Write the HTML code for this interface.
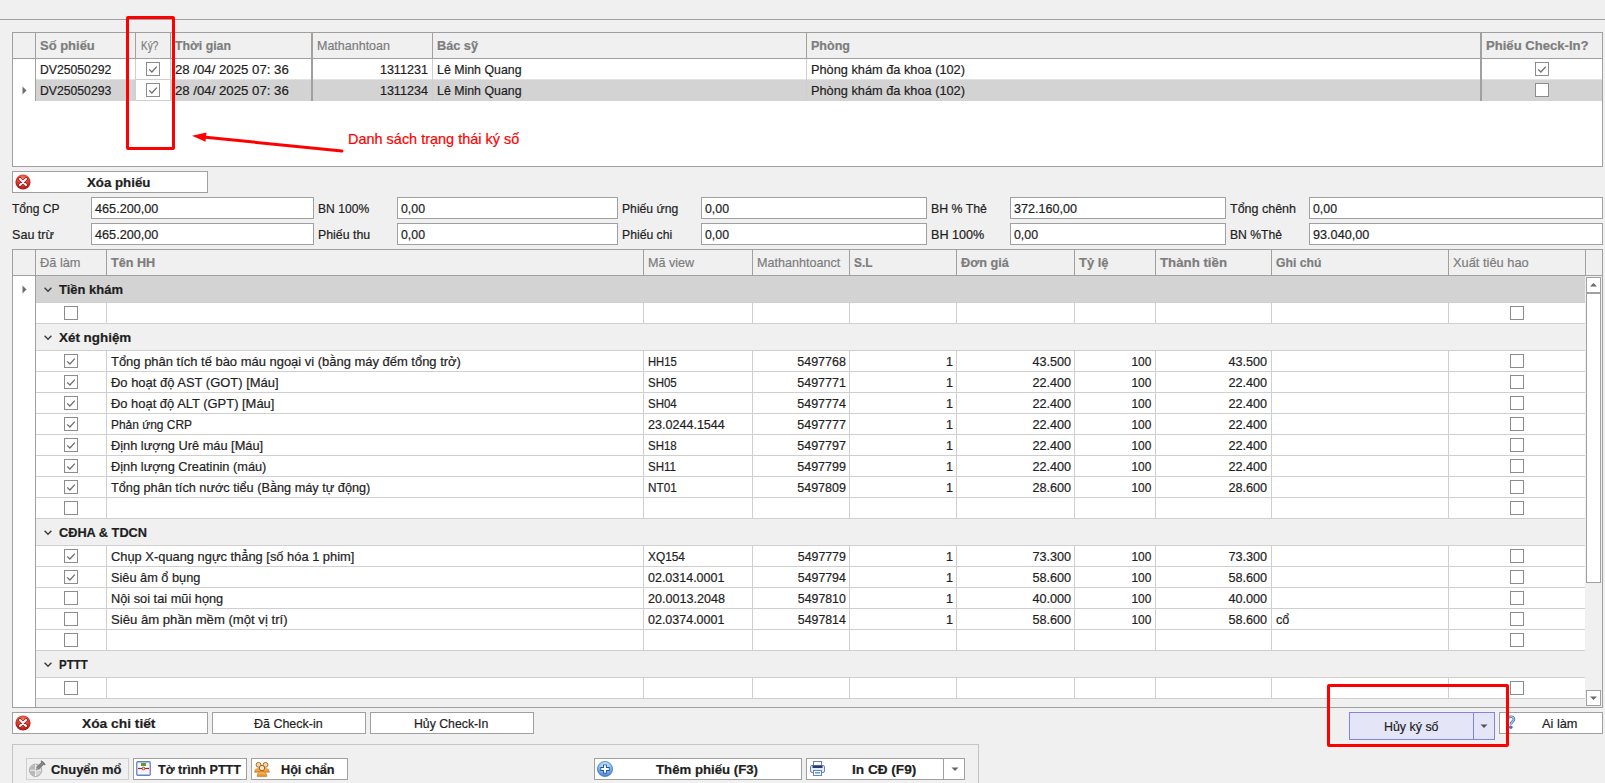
<!DOCTYPE html>
<html><head><meta charset="utf-8"><style>
html,body{margin:0;padding:0}
body{width:1605px;height:783px;overflow:hidden;position:relative;background:#f0f0f0;font-family:'Liberation Sans', sans-serif;}
.a{position:absolute;box-sizing:border-box}
.t{position:absolute;white-space:nowrap;line-height:20px;-webkit-text-stroke:0.2px currentColor}
svg.a{overflow:visible}
</style></head><body>
<div class="a" style="left:0px;top:19px;width:1605px;height:1px;background:#a0a0a0;"></div>
<div class="a" style="left:12px;top:32px;width:1591px;height:135px;background:#fff;border:1px solid #a0a0a0;"></div>
<div class="a" style="left:13px;top:33px;width:1589px;height:25px;background:#f0f0f0;"></div>
<div class="a" style="left:13px;top:58px;width:1589px;height:1px;background:#a0a0a0;"></div>
<div class="a" style="left:35px;top:33px;width:1px;height:25px;background:#a0a0a0;"></div>
<div class="a" style="left:127px;top:33px;width:1px;height:25px;background:#a0a0a0;"></div>
<div class="a" style="left:135px;top:33px;width:1px;height:25px;background:#a0a0a0;"></div>
<div class="a" style="left:170px;top:33px;width:1px;height:25px;background:#a0a0a0;"></div>
<div class="a" style="left:432px;top:33px;width:1px;height:25px;background:#a0a0a0;"></div>
<div class="a" style="left:806px;top:33px;width:1px;height:25px;background:#a0a0a0;"></div>
<div class="a" style="left:311px;top:33px;width:2px;height:25px;background:#a0a0a0;"></div>
<div class="a" style="left:1480px;top:33px;width:2px;height:25px;background:#a0a0a0;"></div>
<div class="a" style="left:36px;top:80px;width:1566px;height:21px;background:#d3d3d3;"></div>
<div class="a" style="left:136px;top:80px;width:34px;height:21px;background:#fff;"></div>
<div class="a" style="left:36px;top:79px;width:1566px;height:1px;background:#e2e2e2;"></div>
<div class="a" style="left:135px;top:79px;width:36px;height:1px;background:#cfcfcf;"></div>
<div class="a" style="left:135px;top:100px;width:36px;height:1px;background:#cfcfcf;"></div>
<div class="a" style="left:35px;top:59px;width:1px;height:42px;background:#a0a0a0;"></div>
<div class="a" style="left:127px;top:59px;width:1px;height:42px;background:#cfcfcf;"></div>
<div class="a" style="left:135px;top:59px;width:1px;height:42px;background:#cfcfcf;"></div>
<div class="a" style="left:170px;top:59px;width:1px;height:42px;background:#cfcfcf;"></div>
<div class="a" style="left:432px;top:59px;width:1px;height:42px;background:#cfcfcf;"></div>
<div class="a" style="left:806px;top:59px;width:1px;height:42px;background:#cfcfcf;"></div>
<div class="a" style="left:311px;top:59px;width:2px;height:42px;background:#a0a0a0;"></div>
<div class="a" style="left:1480px;top:59px;width:2px;height:42px;background:#a0a0a0;"></div>
<svg class="a" style="left:22px;top:86px" width="6" height="9"><path d="M0.5 0.5 L4.5 4.5 L0.5 8.5 Z" fill="#6e6e6e"/></svg>
<div class="t" style="top:36px;font-size:13.1px;color:#7d7d7d;font-weight:bold;left:40.00px;transform-origin:0 0;transform:scaleX(0.9913);">Số phiếu</div>
<div class="t" style="top:36px;font-size:12.8px;color:#7d7d7d;left:141.00px;transform-origin:0 0;transform:scaleX(0.7835);">Ký?</div>
<div class="t" style="top:36px;font-size:13.1px;color:#7d7d7d;font-weight:bold;left:175.00px;transform-origin:0 0;transform:scaleX(0.9406);">Thời gian</div>
<div class="t" style="top:36px;font-size:12.8px;color:#7d7d7d;left:317.00px;transform-origin:0 0;transform:scaleX(0.9766);">Mathanhtoan</div>
<div class="t" style="top:36px;font-size:13.1px;color:#7d7d7d;font-weight:bold;left:437.00px;transform-origin:0 0;transform:scaleX(0.9705);">Bác sỹ</div>
<div class="t" style="top:36px;font-size:13.1px;color:#7d7d7d;font-weight:bold;left:811.00px;transform-origin:0 0;transform:scaleX(0.9573);">Phòng</div>
<div class="t" style="top:36px;font-size:13.1px;color:#7d7d7d;font-weight:bold;left:1486.00px;transform-origin:0 0;">Phiếu Check-In?</div>
<div class="t" style="top:60px;font-size:12.8px;color:#1e1e1e;left:40.00px;transform-origin:0 0;transform:scaleX(0.9538);">DV25050292</div>
<div class="t" style="top:60px;font-size:12.8px;color:#1e1e1e;left:175.00px;transform-origin:0 0;transform:scaleX(1.0314);">28 /04/ 2025 07: 36</div>
<div class="t" style="top:60px;font-size:12.8px;color:#1e1e1e;left:379.10px;transform-origin:48.88px 0;transform:scaleX(0.9817);">1311231</div>
<div class="t" style="top:60px;font-size:12.8px;color:#1e1e1e;left:437.00px;transform-origin:0 0;transform:scaleX(0.9663);">Lê Minh Quang</div>
<div class="t" style="top:60px;font-size:12.8px;color:#1e1e1e;left:811.00px;transform-origin:0 0;transform:scaleX(0.9972);">Phòng khám đa khoa (102)</div>
<div class="a" style="left:146px;top:62px;width:14px;height:14px"><svg width="14" height="14" style="position:absolute;left:0;top:0"><rect x="0.5" y="0.5" width="13" height="13" fill="#fff" stroke="#8c8c8c"/><path d="M3.2 7.4 L5.9 10 L10.8 4.6" fill="none" stroke="#6e6e6e" stroke-width="1.3"/></svg></div>
<div class="a" style="left:1535px;top:62px;width:14px;height:14px"><svg width="14" height="14" style="position:absolute;left:0;top:0"><rect x="0.5" y="0.5" width="13" height="13" fill="#fff" stroke="#8c8c8c"/><path d="M3.2 7.4 L5.9 10 L10.8 4.6" fill="none" stroke="#6e6e6e" stroke-width="1.3"/></svg></div>
<div class="t" style="top:81px;font-size:12.8px;color:#1e1e1e;left:40.00px;transform-origin:0 0;transform:scaleX(0.9538);">DV25050293</div>
<div class="t" style="top:81px;font-size:12.8px;color:#1e1e1e;left:175.00px;transform-origin:0 0;transform:scaleX(1.0314);">28 /04/ 2025 07: 36</div>
<div class="t" style="top:81px;font-size:12.8px;color:#1e1e1e;left:379.10px;transform-origin:48.88px 0;transform:scaleX(0.9817);">1311234</div>
<div class="t" style="top:81px;font-size:12.8px;color:#1e1e1e;left:437.00px;transform-origin:0 0;transform:scaleX(0.9663);">Lê Minh Quang</div>
<div class="t" style="top:81px;font-size:12.8px;color:#1e1e1e;left:811.00px;transform-origin:0 0;transform:scaleX(0.9972);">Phòng khám đa khoa (102)</div>
<div class="a" style="left:146px;top:83px;width:14px;height:14px"><svg width="14" height="14" style="position:absolute;left:0;top:0"><rect x="0.5" y="0.5" width="13" height="13" fill="#fff" stroke="#8c8c8c"/><path d="M3.2 7.4 L5.9 10 L10.8 4.6" fill="none" stroke="#6e6e6e" stroke-width="1.3"/></svg></div>
<div class="a" style="left:1535px;top:83px;width:14px;height:14px"><svg width="14" height="14" style="position:absolute;left:0;top:0"><rect x="0.5" y="0.5" width="13" height="13" fill="#fff" stroke="#8c8c8c"/></svg></div>
<div class="a" style="left:12px;top:171px;width:196px;height:22px;background:#fff;border:1px solid #a0a0a0;"></div>
<svg class="a" style="left:15px;top:174px" width="16" height="16" viewBox="0 0 16 16"><defs><radialGradient id="rg1" cx="50%" cy="35%" r="60%"><stop offset="0" stop-color="#f6a08c"/><stop offset="0.55" stop-color="#e0442e"/><stop offset="1" stop-color="#b01818"/></radialGradient></defs><circle cx="8" cy="8" r="7.6" fill="url(#rg1)"/><path d="M5 5 L11 11 M11 5 L5 11" stroke="#a01010" stroke-width="3.6" stroke-linecap="round"/><path d="M5 5 L11 11 M11 5 L5 11" stroke="#f2f6ff" stroke-width="2.2" stroke-linecap="round"/></svg>
<div class="t" style="top:173px;font-size:13.1px;color:#1e1e1e;font-weight:bold;left:87.00px;transform-origin:0 0;transform:scaleX(1.0125);">Xóa phiếu</div>
<div class="a" style="left:91px;top:197px;width:223px;height:22px;background:#fff;border:1px solid #a0a0a0;"></div>
<div class="t" style="top:199px;font-size:12.8px;color:#1e1e1e;left:12.00px;transform-origin:0 0;transform:scaleX(0.9426);">Tổng CP</div>
<div class="t" style="top:199px;font-size:12.8px;color:#1e1e1e;left:95.00px;transform-origin:0 0;transform:scaleX(0.9896);">465.200,00</div>
<div class="a" style="left:397px;top:197px;width:221px;height:22px;background:#fff;border:1px solid #a0a0a0;"></div>
<div class="t" style="top:199px;font-size:12.8px;color:#1e1e1e;left:318.00px;transform-origin:0 0;transform:scaleX(0.9467);">BN 100%</div>
<div class="t" style="top:199px;font-size:12.8px;color:#1e1e1e;left:401.00px;transform-origin:0 0;transform:scaleX(0.9640);">0,00</div>
<div class="a" style="left:701px;top:197px;width:226px;height:22px;background:#fff;border:1px solid #a0a0a0;"></div>
<div class="t" style="top:199px;font-size:12.8px;color:#1e1e1e;left:622.00px;transform-origin:0 0;transform:scaleX(0.9514);">Phiếu ứng</div>
<div class="t" style="top:199px;font-size:12.8px;color:#1e1e1e;left:705.00px;transform-origin:0 0;transform:scaleX(0.9640);">0,00</div>
<div class="a" style="left:1010px;top:197px;width:216px;height:22px;background:#fff;border:1px solid #a0a0a0;"></div>
<div class="t" style="top:199px;font-size:12.8px;color:#1e1e1e;left:931.00px;transform-origin:0 0;transform:scaleX(0.9637);">BH % Thẻ</div>
<div class="t" style="top:199px;font-size:12.8px;color:#1e1e1e;left:1014.00px;transform-origin:0 0;transform:scaleX(0.9834);">372.160,00</div>
<div class="a" style="left:1309px;top:197px;width:294px;height:22px;background:#fff;border:1px solid #a0a0a0;"></div>
<div class="t" style="top:199px;font-size:12.8px;color:#1e1e1e;left:1230.00px;transform-origin:0 0;transform:scaleX(0.9766);">Tổng chênh</div>
<div class="t" style="top:199px;font-size:12.8px;color:#1e1e1e;left:1313.00px;transform-origin:0 0;transform:scaleX(0.9640);">0,00</div>
<div class="a" style="left:91px;top:223px;width:223px;height:22px;background:#fff;border:1px solid #a0a0a0;"></div>
<div class="t" style="top:225px;font-size:12.8px;color:#1e1e1e;left:12.00px;transform-origin:0 0;transform:scaleX(0.9824);">Sau trừ</div>
<div class="t" style="top:225px;font-size:12.8px;color:#1e1e1e;left:95.00px;transform-origin:0 0;transform:scaleX(0.9896);">465.200,00</div>
<div class="a" style="left:397px;top:223px;width:221px;height:22px;background:#fff;border:1px solid #a0a0a0;"></div>
<div class="t" style="top:225px;font-size:12.8px;color:#1e1e1e;left:318.00px;transform-origin:0 0;transform:scaleX(0.9652);">Phiếu thu</div>
<div class="t" style="top:225px;font-size:12.8px;color:#1e1e1e;left:401.00px;transform-origin:0 0;transform:scaleX(0.9640);">0,00</div>
<div class="a" style="left:701px;top:223px;width:226px;height:22px;background:#fff;border:1px solid #a0a0a0;"></div>
<div class="t" style="top:225px;font-size:12.8px;color:#1e1e1e;left:622.00px;transform-origin:0 0;transform:scaleX(0.9531);">Phiếu chi</div>
<div class="t" style="top:225px;font-size:12.8px;color:#1e1e1e;left:705.00px;transform-origin:0 0;transform:scaleX(0.9640);">0,00</div>
<div class="a" style="left:1010px;top:223px;width:216px;height:22px;background:#fff;border:1px solid #a0a0a0;"></div>
<div class="t" style="top:225px;font-size:12.8px;color:#1e1e1e;left:931.00px;transform-origin:0 0;transform:scaleX(0.9850);">BH 100%</div>
<div class="t" style="top:225px;font-size:12.8px;color:#1e1e1e;left:1014.00px;transform-origin:0 0;transform:scaleX(0.9640);">0,00</div>
<div class="a" style="left:1309px;top:223px;width:294px;height:22px;background:#fff;border:1px solid #a0a0a0;"></div>
<div class="t" style="top:225px;font-size:12.8px;color:#1e1e1e;left:1230.00px;transform-origin:0 0;transform:scaleX(0.9492);">BN %Thẻ</div>
<div class="t" style="top:225px;font-size:12.8px;color:#1e1e1e;left:1313.00px;transform-origin:0 0;transform:scaleX(0.9902);">93.040,00</div>
<div class="a" style="left:12px;top:249px;width:1591px;height:459px;background:#f0f0f0;border:1px solid #a0a0a0;"></div>
<div class="a" style="left:13px;top:275px;width:1589px;height:1px;background:#a0a0a0;"></div>
<div class="a" style="left:35px;top:250px;width:1px;height:25px;background:#a0a0a0;"></div>
<div class="a" style="left:106px;top:250px;width:1px;height:25px;background:#a0a0a0;"></div>
<div class="a" style="left:643px;top:250px;width:1px;height:25px;background:#a0a0a0;"></div>
<div class="a" style="left:752px;top:250px;width:1px;height:25px;background:#a0a0a0;"></div>
<div class="a" style="left:849px;top:250px;width:1px;height:25px;background:#a0a0a0;"></div>
<div class="a" style="left:956px;top:250px;width:1px;height:25px;background:#a0a0a0;"></div>
<div class="a" style="left:1074px;top:250px;width:1px;height:25px;background:#a0a0a0;"></div>
<div class="a" style="left:1155px;top:250px;width:1px;height:25px;background:#a0a0a0;"></div>
<div class="a" style="left:1271px;top:250px;width:1px;height:25px;background:#a0a0a0;"></div>
<div class="a" style="left:1448px;top:250px;width:1px;height:25px;background:#a0a0a0;"></div>
<div class="a" style="left:1585px;top:250px;width:1px;height:25px;background:#a0a0a0;"></div>
<div class="a" style="left:13px;top:276px;width:22px;height:431px;background:#fff;"></div>
<div class="a" style="left:35px;top:276px;width:1px;height:431px;background:#a0a0a0;"></div>
<div class="t" style="top:253px;font-size:12.8px;color:#7d7d7d;left:40.00px;transform-origin:0 0;">Đã làm</div>
<div class="t" style="top:253px;font-size:13.1px;color:#7d7d7d;font-weight:bold;left:111.00px;transform-origin:0 0;transform:scaleX(0.9640);">Tên HH</div>
<div class="t" style="top:253px;font-size:12.8px;color:#7d7d7d;left:648.00px;transform-origin:0 0;transform:scaleX(0.9835);">Mã view</div>
<div class="t" style="top:253px;font-size:12.8px;color:#7d7d7d;left:757.00px;transform-origin:0 0;transform:scaleX(0.9826);">Mathanhtoanct</div>
<div class="t" style="top:253px;font-size:13.1px;color:#7d7d7d;font-weight:bold;left:854.00px;transform-origin:0 0;transform:scaleX(0.9033);">S.L</div>
<div class="t" style="top:253px;font-size:13.1px;color:#7d7d7d;font-weight:bold;left:961.00px;transform-origin:0 0;transform:scaleX(0.9719);">Đơn giá</div>
<div class="t" style="top:253px;font-size:13.1px;color:#7d7d7d;font-weight:bold;left:1079.00px;transform-origin:0 0;transform:scaleX(0.9910);">Tỷ lệ</div>
<div class="t" style="top:253px;font-size:13.1px;color:#7d7d7d;font-weight:bold;left:1160.00px;transform-origin:0 0;transform:scaleX(1.0118);">Thành tiền</div>
<div class="t" style="top:253px;font-size:13.1px;color:#7d7d7d;font-weight:bold;left:1276.00px;transform-origin:0 0;transform:scaleX(0.9316);">Ghi chú</div>
<div class="t" style="top:253px;font-size:12.8px;color:#7d7d7d;left:1453.00px;transform-origin:0 0;transform:scaleX(1.0032);">Xuất tiêu hao</div>
<div class="a" style="left:36px;top:276px;width:1549px;height:26px;background:#d3d3d3;"></div>
<div class="a" style="left:36px;top:302px;width:1549px;height:1px;background:#cfcfcf;"></div>
<svg class="a" style="left:44px;top:287px" width="9" height="6"><path d="M0.6 0.8 L4 4.2 L7.4 0.8" fill="none" stroke="#3a3a3a" stroke-width="1.4"/></svg>
<div class="t" style="top:280px;font-size:13.1px;color:#1e1e1e;font-weight:bold;left:59.00px;transform-origin:0 0;transform:scaleX(0.9910);">Tiền khám</div>
<svg class="a" style="left:22px;top:285px" width="6" height="9"><path d="M0.5 0.5 L4.5 4.5 L0.5 8.5 Z" fill="#6e6e6e"/></svg>
<div class="a" style="left:36px;top:303px;width:1549px;height:20px;background:#fff;"></div>
<div class="a" style="left:36px;top:323px;width:1549px;height:1px;background:#cfcfcf;"></div>
<div class="a" style="left:106px;top:303px;width:1px;height:20px;background:#cfcfcf;"></div>
<div class="a" style="left:643px;top:303px;width:1px;height:20px;background:#cfcfcf;"></div>
<div class="a" style="left:752px;top:303px;width:1px;height:20px;background:#cfcfcf;"></div>
<div class="a" style="left:849px;top:303px;width:1px;height:20px;background:#cfcfcf;"></div>
<div class="a" style="left:956px;top:303px;width:1px;height:20px;background:#cfcfcf;"></div>
<div class="a" style="left:1074px;top:303px;width:1px;height:20px;background:#cfcfcf;"></div>
<div class="a" style="left:1155px;top:303px;width:1px;height:20px;background:#cfcfcf;"></div>
<div class="a" style="left:1271px;top:303px;width:1px;height:20px;background:#cfcfcf;"></div>
<div class="a" style="left:1448px;top:303px;width:1px;height:20px;background:#cfcfcf;"></div>
<div class="a" style="left:64px;top:306px;width:14px;height:14px"><svg width="14" height="14" style="position:absolute;left:0;top:0"><rect x="0.5" y="0.5" width="13" height="13" fill="#fff" stroke="#8c8c8c"/></svg></div>
<div class="a" style="left:1510px;top:306px;width:14px;height:14px"><svg width="14" height="14" style="position:absolute;left:0;top:0"><rect x="0.5" y="0.5" width="13" height="13" fill="#fff" stroke="#8c8c8c"/></svg></div>
<div class="a" style="left:36px;top:324px;width:1549px;height:26px;background:#f0f0f0;"></div>
<div class="a" style="left:36px;top:350px;width:1549px;height:1px;background:#cfcfcf;"></div>
<svg class="a" style="left:44px;top:335px" width="9" height="6"><path d="M0.6 0.8 L4 4.2 L7.4 0.8" fill="none" stroke="#3a3a3a" stroke-width="1.4"/></svg>
<div class="t" style="top:328px;font-size:13.1px;color:#1e1e1e;font-weight:bold;left:59.00px;transform-origin:0 0;transform:scaleX(1.0239);">Xét nghiệm</div>
<div class="a" style="left:36px;top:351px;width:1549px;height:20px;background:#fff;"></div>
<div class="a" style="left:36px;top:371px;width:1549px;height:1px;background:#cfcfcf;"></div>
<div class="a" style="left:106px;top:351px;width:1px;height:20px;background:#cfcfcf;"></div>
<div class="a" style="left:643px;top:351px;width:1px;height:20px;background:#cfcfcf;"></div>
<div class="a" style="left:752px;top:351px;width:1px;height:20px;background:#cfcfcf;"></div>
<div class="a" style="left:849px;top:351px;width:1px;height:20px;background:#cfcfcf;"></div>
<div class="a" style="left:956px;top:351px;width:1px;height:20px;background:#cfcfcf;"></div>
<div class="a" style="left:1074px;top:351px;width:1px;height:20px;background:#cfcfcf;"></div>
<div class="a" style="left:1155px;top:351px;width:1px;height:20px;background:#cfcfcf;"></div>
<div class="a" style="left:1271px;top:351px;width:1px;height:20px;background:#cfcfcf;"></div>
<div class="a" style="left:1448px;top:351px;width:1px;height:20px;background:#cfcfcf;"></div>
<div class="a" style="left:64px;top:354px;width:14px;height:14px"><svg width="14" height="14" style="position:absolute;left:0;top:0"><rect x="0.5" y="0.5" width="13" height="13" fill="#fff" stroke="#8c8c8c"/><path d="M3.2 7.4 L5.9 10 L10.8 4.6" fill="none" stroke="#6e6e6e" stroke-width="1.3"/></svg></div>
<div class="a" style="left:1510px;top:354px;width:14px;height:14px"><svg width="14" height="14" style="position:absolute;left:0;top:0"><rect x="0.5" y="0.5" width="13" height="13" fill="#fff" stroke="#8c8c8c"/></svg></div>
<div class="t" style="top:352px;font-size:12.8px;color:#1e1e1e;left:111.00px;transform-origin:0 0;transform:scaleX(1.0125);">Tổng phân tích tế bào máu ngoại vi (bằng máy đếm tổng trở)</div>
<div class="t" style="top:352px;font-size:12.8px;color:#1e1e1e;left:648.00px;transform-origin:0 0;transform:scaleX(0.8776);">HH15</div>
<div class="t" style="top:352px;font-size:12.8px;color:#1e1e1e;left:796.14px;transform-origin:49.83px 0;transform:scaleX(0.9748);">5497768</div>
<div class="t" style="top:352px;font-size:12.8px;color:#1e1e1e;left:945.90px;transform-origin:7.12px 0;transform:scaleX(0.9850);">1</div>
<div class="t" style="top:352px;font-size:12.8px;color:#1e1e1e;left:1031.83px;transform-origin:39.15px 0;transform:scaleX(0.9881);">43.500</div>
<div class="t" style="top:352px;font-size:12.8px;color:#1e1e1e;left:1129.63px;transform-origin:21.36px 0;transform:scaleX(0.9310);">100</div>
<div class="t" style="top:352px;font-size:12.8px;color:#1e1e1e;left:1227.83px;transform-origin:39.15px 0;transform:scaleX(0.9881);">43.500</div>
<div class="a" style="left:36px;top:372px;width:1549px;height:20px;background:#fff;"></div>
<div class="a" style="left:36px;top:392px;width:1549px;height:1px;background:#cfcfcf;"></div>
<div class="a" style="left:106px;top:372px;width:1px;height:20px;background:#cfcfcf;"></div>
<div class="a" style="left:643px;top:372px;width:1px;height:20px;background:#cfcfcf;"></div>
<div class="a" style="left:752px;top:372px;width:1px;height:20px;background:#cfcfcf;"></div>
<div class="a" style="left:849px;top:372px;width:1px;height:20px;background:#cfcfcf;"></div>
<div class="a" style="left:956px;top:372px;width:1px;height:20px;background:#cfcfcf;"></div>
<div class="a" style="left:1074px;top:372px;width:1px;height:20px;background:#cfcfcf;"></div>
<div class="a" style="left:1155px;top:372px;width:1px;height:20px;background:#cfcfcf;"></div>
<div class="a" style="left:1271px;top:372px;width:1px;height:20px;background:#cfcfcf;"></div>
<div class="a" style="left:1448px;top:372px;width:1px;height:20px;background:#cfcfcf;"></div>
<div class="a" style="left:64px;top:375px;width:14px;height:14px"><svg width="14" height="14" style="position:absolute;left:0;top:0"><rect x="0.5" y="0.5" width="13" height="13" fill="#fff" stroke="#8c8c8c"/><path d="M3.2 7.4 L5.9 10 L10.8 4.6" fill="none" stroke="#6e6e6e" stroke-width="1.3"/></svg></div>
<div class="a" style="left:1510px;top:375px;width:14px;height:14px"><svg width="14" height="14" style="position:absolute;left:0;top:0"><rect x="0.5" y="0.5" width="13" height="13" fill="#fff" stroke="#8c8c8c"/></svg></div>
<div class="t" style="top:373px;font-size:12.8px;color:#1e1e1e;left:111.00px;transform-origin:0 0;transform:scaleX(1.0127);">Đo hoạt độ AST (GOT) [Máu]</div>
<div class="t" style="top:373px;font-size:12.8px;color:#1e1e1e;left:648.00px;transform-origin:0 0;transform:scaleX(0.8969);">SH05</div>
<div class="t" style="top:373px;font-size:12.8px;color:#1e1e1e;left:796.14px;transform-origin:49.83px 0;transform:scaleX(0.9748);">5497771</div>
<div class="t" style="top:373px;font-size:12.8px;color:#1e1e1e;left:945.90px;transform-origin:7.12px 0;transform:scaleX(0.9850);">1</div>
<div class="t" style="top:373px;font-size:12.8px;color:#1e1e1e;left:1031.83px;transform-origin:39.15px 0;transform:scaleX(0.9881);">22.400</div>
<div class="t" style="top:373px;font-size:12.8px;color:#1e1e1e;left:1129.63px;transform-origin:21.36px 0;transform:scaleX(0.9310);">100</div>
<div class="t" style="top:373px;font-size:12.8px;color:#1e1e1e;left:1227.83px;transform-origin:39.15px 0;transform:scaleX(0.9881);">22.400</div>
<div class="a" style="left:36px;top:393px;width:1549px;height:20px;background:#fff;"></div>
<div class="a" style="left:36px;top:413px;width:1549px;height:1px;background:#cfcfcf;"></div>
<div class="a" style="left:106px;top:393px;width:1px;height:20px;background:#cfcfcf;"></div>
<div class="a" style="left:643px;top:393px;width:1px;height:20px;background:#cfcfcf;"></div>
<div class="a" style="left:752px;top:393px;width:1px;height:20px;background:#cfcfcf;"></div>
<div class="a" style="left:849px;top:393px;width:1px;height:20px;background:#cfcfcf;"></div>
<div class="a" style="left:956px;top:393px;width:1px;height:20px;background:#cfcfcf;"></div>
<div class="a" style="left:1074px;top:393px;width:1px;height:20px;background:#cfcfcf;"></div>
<div class="a" style="left:1155px;top:393px;width:1px;height:20px;background:#cfcfcf;"></div>
<div class="a" style="left:1271px;top:393px;width:1px;height:20px;background:#cfcfcf;"></div>
<div class="a" style="left:1448px;top:393px;width:1px;height:20px;background:#cfcfcf;"></div>
<div class="a" style="left:64px;top:396px;width:14px;height:14px"><svg width="14" height="14" style="position:absolute;left:0;top:0"><rect x="0.5" y="0.5" width="13" height="13" fill="#fff" stroke="#8c8c8c"/><path d="M3.2 7.4 L5.9 10 L10.8 4.6" fill="none" stroke="#6e6e6e" stroke-width="1.3"/></svg></div>
<div class="a" style="left:1510px;top:396px;width:14px;height:14px"><svg width="14" height="14" style="position:absolute;left:0;top:0"><rect x="0.5" y="0.5" width="13" height="13" fill="#fff" stroke="#8c8c8c"/></svg></div>
<div class="t" style="top:394px;font-size:12.8px;color:#1e1e1e;left:111.00px;transform-origin:0 0;transform:scaleX(1.0103);">Đo hoạt độ ALT (GPT) [Máu]</div>
<div class="t" style="top:394px;font-size:12.8px;color:#1e1e1e;left:648.00px;transform-origin:0 0;transform:scaleX(0.8969);">SH04</div>
<div class="t" style="top:394px;font-size:12.8px;color:#1e1e1e;left:796.14px;transform-origin:49.83px 0;transform:scaleX(0.9748);">5497774</div>
<div class="t" style="top:394px;font-size:12.8px;color:#1e1e1e;left:945.90px;transform-origin:7.12px 0;transform:scaleX(0.9850);">1</div>
<div class="t" style="top:394px;font-size:12.8px;color:#1e1e1e;left:1031.83px;transform-origin:39.15px 0;transform:scaleX(0.9881);">22.400</div>
<div class="t" style="top:394px;font-size:12.8px;color:#1e1e1e;left:1129.63px;transform-origin:21.36px 0;transform:scaleX(0.9310);">100</div>
<div class="t" style="top:394px;font-size:12.8px;color:#1e1e1e;left:1227.83px;transform-origin:39.15px 0;transform:scaleX(0.9881);">22.400</div>
<div class="a" style="left:36px;top:414px;width:1549px;height:20px;background:#fff;"></div>
<div class="a" style="left:36px;top:434px;width:1549px;height:1px;background:#cfcfcf;"></div>
<div class="a" style="left:106px;top:414px;width:1px;height:20px;background:#cfcfcf;"></div>
<div class="a" style="left:643px;top:414px;width:1px;height:20px;background:#cfcfcf;"></div>
<div class="a" style="left:752px;top:414px;width:1px;height:20px;background:#cfcfcf;"></div>
<div class="a" style="left:849px;top:414px;width:1px;height:20px;background:#cfcfcf;"></div>
<div class="a" style="left:956px;top:414px;width:1px;height:20px;background:#cfcfcf;"></div>
<div class="a" style="left:1074px;top:414px;width:1px;height:20px;background:#cfcfcf;"></div>
<div class="a" style="left:1155px;top:414px;width:1px;height:20px;background:#cfcfcf;"></div>
<div class="a" style="left:1271px;top:414px;width:1px;height:20px;background:#cfcfcf;"></div>
<div class="a" style="left:1448px;top:414px;width:1px;height:20px;background:#cfcfcf;"></div>
<div class="a" style="left:64px;top:417px;width:14px;height:14px"><svg width="14" height="14" style="position:absolute;left:0;top:0"><rect x="0.5" y="0.5" width="13" height="13" fill="#fff" stroke="#8c8c8c"/><path d="M3.2 7.4 L5.9 10 L10.8 4.6" fill="none" stroke="#6e6e6e" stroke-width="1.3"/></svg></div>
<div class="a" style="left:1510px;top:417px;width:14px;height:14px"><svg width="14" height="14" style="position:absolute;left:0;top:0"><rect x="0.5" y="0.5" width="13" height="13" fill="#fff" stroke="#8c8c8c"/></svg></div>
<div class="t" style="top:415px;font-size:12.8px;color:#1e1e1e;left:111.00px;transform-origin:0 0;transform:scaleX(0.9327);">Phản ứng CRP</div>
<div class="t" style="top:415px;font-size:12.8px;color:#1e1e1e;left:648.00px;transform-origin:0 0;transform:scaleX(0.9812);">23.0244.1544</div>
<div class="t" style="top:415px;font-size:12.8px;color:#1e1e1e;left:796.14px;transform-origin:49.83px 0;transform:scaleX(0.9748);">5497777</div>
<div class="t" style="top:415px;font-size:12.8px;color:#1e1e1e;left:945.90px;transform-origin:7.12px 0;transform:scaleX(0.9850);">1</div>
<div class="t" style="top:415px;font-size:12.8px;color:#1e1e1e;left:1031.83px;transform-origin:39.15px 0;transform:scaleX(0.9881);">22.400</div>
<div class="t" style="top:415px;font-size:12.8px;color:#1e1e1e;left:1129.63px;transform-origin:21.36px 0;transform:scaleX(0.9310);">100</div>
<div class="t" style="top:415px;font-size:12.8px;color:#1e1e1e;left:1227.83px;transform-origin:39.15px 0;transform:scaleX(0.9881);">22.400</div>
<div class="a" style="left:36px;top:435px;width:1549px;height:20px;background:#fff;"></div>
<div class="a" style="left:36px;top:455px;width:1549px;height:1px;background:#cfcfcf;"></div>
<div class="a" style="left:106px;top:435px;width:1px;height:20px;background:#cfcfcf;"></div>
<div class="a" style="left:643px;top:435px;width:1px;height:20px;background:#cfcfcf;"></div>
<div class="a" style="left:752px;top:435px;width:1px;height:20px;background:#cfcfcf;"></div>
<div class="a" style="left:849px;top:435px;width:1px;height:20px;background:#cfcfcf;"></div>
<div class="a" style="left:956px;top:435px;width:1px;height:20px;background:#cfcfcf;"></div>
<div class="a" style="left:1074px;top:435px;width:1px;height:20px;background:#cfcfcf;"></div>
<div class="a" style="left:1155px;top:435px;width:1px;height:20px;background:#cfcfcf;"></div>
<div class="a" style="left:1271px;top:435px;width:1px;height:20px;background:#cfcfcf;"></div>
<div class="a" style="left:1448px;top:435px;width:1px;height:20px;background:#cfcfcf;"></div>
<div class="a" style="left:64px;top:438px;width:14px;height:14px"><svg width="14" height="14" style="position:absolute;left:0;top:0"><rect x="0.5" y="0.5" width="13" height="13" fill="#fff" stroke="#8c8c8c"/><path d="M3.2 7.4 L5.9 10 L10.8 4.6" fill="none" stroke="#6e6e6e" stroke-width="1.3"/></svg></div>
<div class="a" style="left:1510px;top:438px;width:14px;height:14px"><svg width="14" height="14" style="position:absolute;left:0;top:0"><rect x="0.5" y="0.5" width="13" height="13" fill="#fff" stroke="#8c8c8c"/></svg></div>
<div class="t" style="top:436px;font-size:12.8px;color:#1e1e1e;left:111.00px;transform-origin:0 0;">Định lượng Urê máu [Máu]</div>
<div class="t" style="top:436px;font-size:12.8px;color:#1e1e1e;left:648.00px;transform-origin:0 0;transform:scaleX(0.8969);">SH18</div>
<div class="t" style="top:436px;font-size:12.8px;color:#1e1e1e;left:796.14px;transform-origin:49.83px 0;transform:scaleX(0.9748);">5497797</div>
<div class="t" style="top:436px;font-size:12.8px;color:#1e1e1e;left:945.90px;transform-origin:7.12px 0;transform:scaleX(0.9850);">1</div>
<div class="t" style="top:436px;font-size:12.8px;color:#1e1e1e;left:1031.83px;transform-origin:39.15px 0;transform:scaleX(0.9881);">22.400</div>
<div class="t" style="top:436px;font-size:12.8px;color:#1e1e1e;left:1129.63px;transform-origin:21.36px 0;transform:scaleX(0.9310);">100</div>
<div class="t" style="top:436px;font-size:12.8px;color:#1e1e1e;left:1227.83px;transform-origin:39.15px 0;transform:scaleX(0.9881);">22.400</div>
<div class="a" style="left:36px;top:456px;width:1549px;height:20px;background:#fff;"></div>
<div class="a" style="left:36px;top:476px;width:1549px;height:1px;background:#cfcfcf;"></div>
<div class="a" style="left:106px;top:456px;width:1px;height:20px;background:#cfcfcf;"></div>
<div class="a" style="left:643px;top:456px;width:1px;height:20px;background:#cfcfcf;"></div>
<div class="a" style="left:752px;top:456px;width:1px;height:20px;background:#cfcfcf;"></div>
<div class="a" style="left:849px;top:456px;width:1px;height:20px;background:#cfcfcf;"></div>
<div class="a" style="left:956px;top:456px;width:1px;height:20px;background:#cfcfcf;"></div>
<div class="a" style="left:1074px;top:456px;width:1px;height:20px;background:#cfcfcf;"></div>
<div class="a" style="left:1155px;top:456px;width:1px;height:20px;background:#cfcfcf;"></div>
<div class="a" style="left:1271px;top:456px;width:1px;height:20px;background:#cfcfcf;"></div>
<div class="a" style="left:1448px;top:456px;width:1px;height:20px;background:#cfcfcf;"></div>
<div class="a" style="left:64px;top:459px;width:14px;height:14px"><svg width="14" height="14" style="position:absolute;left:0;top:0"><rect x="0.5" y="0.5" width="13" height="13" fill="#fff" stroke="#8c8c8c"/><path d="M3.2 7.4 L5.9 10 L10.8 4.6" fill="none" stroke="#6e6e6e" stroke-width="1.3"/></svg></div>
<div class="a" style="left:1510px;top:459px;width:14px;height:14px"><svg width="14" height="14" style="position:absolute;left:0;top:0"><rect x="0.5" y="0.5" width="13" height="13" fill="#fff" stroke="#8c8c8c"/></svg></div>
<div class="t" style="top:457px;font-size:12.8px;color:#1e1e1e;left:111.00px;transform-origin:0 0;transform:scaleX(0.9980);">Định lượng Creatinin (máu)</div>
<div class="t" style="top:457px;font-size:12.8px;color:#1e1e1e;left:648.00px;transform-origin:0 0;transform:scaleX(0.9021);">SH11</div>
<div class="t" style="top:457px;font-size:12.8px;color:#1e1e1e;left:796.14px;transform-origin:49.83px 0;transform:scaleX(0.9748);">5497799</div>
<div class="t" style="top:457px;font-size:12.8px;color:#1e1e1e;left:945.90px;transform-origin:7.12px 0;transform:scaleX(0.9850);">1</div>
<div class="t" style="top:457px;font-size:12.8px;color:#1e1e1e;left:1031.83px;transform-origin:39.15px 0;transform:scaleX(0.9881);">22.400</div>
<div class="t" style="top:457px;font-size:12.8px;color:#1e1e1e;left:1129.63px;transform-origin:21.36px 0;transform:scaleX(0.9310);">100</div>
<div class="t" style="top:457px;font-size:12.8px;color:#1e1e1e;left:1227.83px;transform-origin:39.15px 0;transform:scaleX(0.9881);">22.400</div>
<div class="a" style="left:36px;top:477px;width:1549px;height:20px;background:#fff;"></div>
<div class="a" style="left:36px;top:497px;width:1549px;height:1px;background:#cfcfcf;"></div>
<div class="a" style="left:106px;top:477px;width:1px;height:20px;background:#cfcfcf;"></div>
<div class="a" style="left:643px;top:477px;width:1px;height:20px;background:#cfcfcf;"></div>
<div class="a" style="left:752px;top:477px;width:1px;height:20px;background:#cfcfcf;"></div>
<div class="a" style="left:849px;top:477px;width:1px;height:20px;background:#cfcfcf;"></div>
<div class="a" style="left:956px;top:477px;width:1px;height:20px;background:#cfcfcf;"></div>
<div class="a" style="left:1074px;top:477px;width:1px;height:20px;background:#cfcfcf;"></div>
<div class="a" style="left:1155px;top:477px;width:1px;height:20px;background:#cfcfcf;"></div>
<div class="a" style="left:1271px;top:477px;width:1px;height:20px;background:#cfcfcf;"></div>
<div class="a" style="left:1448px;top:477px;width:1px;height:20px;background:#cfcfcf;"></div>
<div class="a" style="left:64px;top:480px;width:14px;height:14px"><svg width="14" height="14" style="position:absolute;left:0;top:0"><rect x="0.5" y="0.5" width="13" height="13" fill="#fff" stroke="#8c8c8c"/><path d="M3.2 7.4 L5.9 10 L10.8 4.6" fill="none" stroke="#6e6e6e" stroke-width="1.3"/></svg></div>
<div class="a" style="left:1510px;top:480px;width:14px;height:14px"><svg width="14" height="14" style="position:absolute;left:0;top:0"><rect x="0.5" y="0.5" width="13" height="13" fill="#fff" stroke="#8c8c8c"/></svg></div>
<div class="t" style="top:478px;font-size:12.8px;color:#1e1e1e;left:111.00px;transform-origin:0 0;transform:scaleX(0.9937);">Tổng phân tích nước tiểu (Bằng máy tự động)</div>
<div class="t" style="top:478px;font-size:12.8px;color:#1e1e1e;left:648.00px;transform-origin:0 0;transform:scaleX(0.9171);">NT01</div>
<div class="t" style="top:478px;font-size:12.8px;color:#1e1e1e;left:796.14px;transform-origin:49.83px 0;transform:scaleX(0.9748);">5497809</div>
<div class="t" style="top:478px;font-size:12.8px;color:#1e1e1e;left:945.90px;transform-origin:7.12px 0;transform:scaleX(0.9850);">1</div>
<div class="t" style="top:478px;font-size:12.8px;color:#1e1e1e;left:1031.83px;transform-origin:39.15px 0;transform:scaleX(0.9881);">28.600</div>
<div class="t" style="top:478px;font-size:12.8px;color:#1e1e1e;left:1129.63px;transform-origin:21.36px 0;transform:scaleX(0.9310);">100</div>
<div class="t" style="top:478px;font-size:12.8px;color:#1e1e1e;left:1227.83px;transform-origin:39.15px 0;transform:scaleX(0.9881);">28.600</div>
<div class="a" style="left:36px;top:498px;width:1549px;height:20px;background:#fff;"></div>
<div class="a" style="left:36px;top:518px;width:1549px;height:1px;background:#cfcfcf;"></div>
<div class="a" style="left:106px;top:498px;width:1px;height:20px;background:#cfcfcf;"></div>
<div class="a" style="left:643px;top:498px;width:1px;height:20px;background:#cfcfcf;"></div>
<div class="a" style="left:752px;top:498px;width:1px;height:20px;background:#cfcfcf;"></div>
<div class="a" style="left:849px;top:498px;width:1px;height:20px;background:#cfcfcf;"></div>
<div class="a" style="left:956px;top:498px;width:1px;height:20px;background:#cfcfcf;"></div>
<div class="a" style="left:1074px;top:498px;width:1px;height:20px;background:#cfcfcf;"></div>
<div class="a" style="left:1155px;top:498px;width:1px;height:20px;background:#cfcfcf;"></div>
<div class="a" style="left:1271px;top:498px;width:1px;height:20px;background:#cfcfcf;"></div>
<div class="a" style="left:1448px;top:498px;width:1px;height:20px;background:#cfcfcf;"></div>
<div class="a" style="left:64px;top:501px;width:14px;height:14px"><svg width="14" height="14" style="position:absolute;left:0;top:0"><rect x="0.5" y="0.5" width="13" height="13" fill="#fff" stroke="#8c8c8c"/></svg></div>
<div class="a" style="left:1510px;top:501px;width:14px;height:14px"><svg width="14" height="14" style="position:absolute;left:0;top:0"><rect x="0.5" y="0.5" width="13" height="13" fill="#fff" stroke="#8c8c8c"/></svg></div>
<div class="a" style="left:36px;top:519px;width:1549px;height:26px;background:#f0f0f0;"></div>
<div class="a" style="left:36px;top:545px;width:1549px;height:1px;background:#cfcfcf;"></div>
<svg class="a" style="left:44px;top:530px" width="9" height="6"><path d="M0.6 0.8 L4 4.2 L7.4 0.8" fill="none" stroke="#3a3a3a" stroke-width="1.4"/></svg>
<div class="t" style="top:523px;font-size:13.1px;color:#1e1e1e;font-weight:bold;left:59.00px;transform-origin:0 0;transform:scaleX(0.9729);">CĐHA &amp; TDCN</div>
<div class="a" style="left:36px;top:546px;width:1549px;height:20px;background:#fff;"></div>
<div class="a" style="left:36px;top:566px;width:1549px;height:1px;background:#cfcfcf;"></div>
<div class="a" style="left:106px;top:546px;width:1px;height:20px;background:#cfcfcf;"></div>
<div class="a" style="left:643px;top:546px;width:1px;height:20px;background:#cfcfcf;"></div>
<div class="a" style="left:752px;top:546px;width:1px;height:20px;background:#cfcfcf;"></div>
<div class="a" style="left:849px;top:546px;width:1px;height:20px;background:#cfcfcf;"></div>
<div class="a" style="left:956px;top:546px;width:1px;height:20px;background:#cfcfcf;"></div>
<div class="a" style="left:1074px;top:546px;width:1px;height:20px;background:#cfcfcf;"></div>
<div class="a" style="left:1155px;top:546px;width:1px;height:20px;background:#cfcfcf;"></div>
<div class="a" style="left:1271px;top:546px;width:1px;height:20px;background:#cfcfcf;"></div>
<div class="a" style="left:1448px;top:546px;width:1px;height:20px;background:#cfcfcf;"></div>
<div class="a" style="left:64px;top:549px;width:14px;height:14px"><svg width="14" height="14" style="position:absolute;left:0;top:0"><rect x="0.5" y="0.5" width="13" height="13" fill="#fff" stroke="#8c8c8c"/><path d="M3.2 7.4 L5.9 10 L10.8 4.6" fill="none" stroke="#6e6e6e" stroke-width="1.3"/></svg></div>
<div class="a" style="left:1510px;top:549px;width:14px;height:14px"><svg width="14" height="14" style="position:absolute;left:0;top:0"><rect x="0.5" y="0.5" width="13" height="13" fill="#fff" stroke="#8c8c8c"/></svg></div>
<div class="t" style="top:547px;font-size:12.8px;color:#1e1e1e;left:111.00px;transform-origin:0 0;transform:scaleX(1.0059);">Chụp X-quang ngực thẳng [số hóa 1 phim]</div>
<div class="t" style="top:547px;font-size:12.8px;color:#1e1e1e;left:648.00px;transform-origin:0 0;transform:scaleX(0.9280);">XQ154</div>
<div class="t" style="top:547px;font-size:12.8px;color:#1e1e1e;left:796.14px;transform-origin:49.83px 0;transform:scaleX(0.9628);">5497779</div>
<div class="t" style="top:547px;font-size:12.8px;color:#1e1e1e;left:945.90px;transform-origin:7.12px 0;transform:scaleX(0.9850);">1</div>
<div class="t" style="top:547px;font-size:12.8px;color:#1e1e1e;left:1031.83px;transform-origin:39.15px 0;transform:scaleX(0.9881);">73.300</div>
<div class="t" style="top:547px;font-size:12.8px;color:#1e1e1e;left:1129.63px;transform-origin:21.36px 0;transform:scaleX(0.9310);">100</div>
<div class="t" style="top:547px;font-size:12.8px;color:#1e1e1e;left:1227.83px;transform-origin:39.15px 0;transform:scaleX(0.9881);">73.300</div>
<div class="a" style="left:36px;top:567px;width:1549px;height:20px;background:#fff;"></div>
<div class="a" style="left:36px;top:587px;width:1549px;height:1px;background:#cfcfcf;"></div>
<div class="a" style="left:106px;top:567px;width:1px;height:20px;background:#cfcfcf;"></div>
<div class="a" style="left:643px;top:567px;width:1px;height:20px;background:#cfcfcf;"></div>
<div class="a" style="left:752px;top:567px;width:1px;height:20px;background:#cfcfcf;"></div>
<div class="a" style="left:849px;top:567px;width:1px;height:20px;background:#cfcfcf;"></div>
<div class="a" style="left:956px;top:567px;width:1px;height:20px;background:#cfcfcf;"></div>
<div class="a" style="left:1074px;top:567px;width:1px;height:20px;background:#cfcfcf;"></div>
<div class="a" style="left:1155px;top:567px;width:1px;height:20px;background:#cfcfcf;"></div>
<div class="a" style="left:1271px;top:567px;width:1px;height:20px;background:#cfcfcf;"></div>
<div class="a" style="left:1448px;top:567px;width:1px;height:20px;background:#cfcfcf;"></div>
<div class="a" style="left:64px;top:570px;width:14px;height:14px"><svg width="14" height="14" style="position:absolute;left:0;top:0"><rect x="0.5" y="0.5" width="13" height="13" fill="#fff" stroke="#8c8c8c"/><path d="M3.2 7.4 L5.9 10 L10.8 4.6" fill="none" stroke="#6e6e6e" stroke-width="1.3"/></svg></div>
<div class="a" style="left:1510px;top:570px;width:14px;height:14px"><svg width="14" height="14" style="position:absolute;left:0;top:0"><rect x="0.5" y="0.5" width="13" height="13" fill="#fff" stroke="#8c8c8c"/></svg></div>
<div class="t" style="top:568px;font-size:12.8px;color:#1e1e1e;left:111.00px;transform-origin:0 0;transform:scaleX(0.9971);">Siêu âm ổ bụng</div>
<div class="t" style="top:568px;font-size:12.8px;color:#1e1e1e;left:648.00px;transform-origin:0 0;transform:scaleX(0.9761);">02.0314.0001</div>
<div class="t" style="top:568px;font-size:12.8px;color:#1e1e1e;left:796.14px;transform-origin:49.83px 0;transform:scaleX(0.9628);">5497794</div>
<div class="t" style="top:568px;font-size:12.8px;color:#1e1e1e;left:945.90px;transform-origin:7.12px 0;transform:scaleX(0.9850);">1</div>
<div class="t" style="top:568px;font-size:12.8px;color:#1e1e1e;left:1031.83px;transform-origin:39.15px 0;transform:scaleX(0.9881);">58.600</div>
<div class="t" style="top:568px;font-size:12.8px;color:#1e1e1e;left:1129.63px;transform-origin:21.36px 0;transform:scaleX(0.9310);">100</div>
<div class="t" style="top:568px;font-size:12.8px;color:#1e1e1e;left:1227.83px;transform-origin:39.15px 0;transform:scaleX(0.9881);">58.600</div>
<div class="a" style="left:36px;top:588px;width:1549px;height:20px;background:#fff;"></div>
<div class="a" style="left:36px;top:608px;width:1549px;height:1px;background:#cfcfcf;"></div>
<div class="a" style="left:106px;top:588px;width:1px;height:20px;background:#cfcfcf;"></div>
<div class="a" style="left:643px;top:588px;width:1px;height:20px;background:#cfcfcf;"></div>
<div class="a" style="left:752px;top:588px;width:1px;height:20px;background:#cfcfcf;"></div>
<div class="a" style="left:849px;top:588px;width:1px;height:20px;background:#cfcfcf;"></div>
<div class="a" style="left:956px;top:588px;width:1px;height:20px;background:#cfcfcf;"></div>
<div class="a" style="left:1074px;top:588px;width:1px;height:20px;background:#cfcfcf;"></div>
<div class="a" style="left:1155px;top:588px;width:1px;height:20px;background:#cfcfcf;"></div>
<div class="a" style="left:1271px;top:588px;width:1px;height:20px;background:#cfcfcf;"></div>
<div class="a" style="left:1448px;top:588px;width:1px;height:20px;background:#cfcfcf;"></div>
<div class="a" style="left:64px;top:591px;width:14px;height:14px"><svg width="14" height="14" style="position:absolute;left:0;top:0"><rect x="0.5" y="0.5" width="13" height="13" fill="#fff" stroke="#8c8c8c"/></svg></div>
<div class="a" style="left:1510px;top:591px;width:14px;height:14px"><svg width="14" height="14" style="position:absolute;left:0;top:0"><rect x="0.5" y="0.5" width="13" height="13" fill="#fff" stroke="#8c8c8c"/></svg></div>
<div class="t" style="top:589px;font-size:12.8px;color:#1e1e1e;left:111.00px;transform-origin:0 0;transform:scaleX(0.9984);">Nội soi tai mũi họng</div>
<div class="t" style="top:589px;font-size:12.8px;color:#1e1e1e;left:648.00px;transform-origin:0 0;transform:scaleX(0.9837);">20.0013.2048</div>
<div class="t" style="top:589px;font-size:12.8px;color:#1e1e1e;left:796.14px;transform-origin:49.83px 0;transform:scaleX(0.9628);">5497810</div>
<div class="t" style="top:589px;font-size:12.8px;color:#1e1e1e;left:945.90px;transform-origin:7.12px 0;transform:scaleX(0.9850);">1</div>
<div class="t" style="top:589px;font-size:12.8px;color:#1e1e1e;left:1031.83px;transform-origin:39.15px 0;transform:scaleX(0.9881);">40.000</div>
<div class="t" style="top:589px;font-size:12.8px;color:#1e1e1e;left:1129.63px;transform-origin:21.36px 0;transform:scaleX(0.9310);">100</div>
<div class="t" style="top:589px;font-size:12.8px;color:#1e1e1e;left:1227.83px;transform-origin:39.15px 0;transform:scaleX(0.9881);">40.000</div>
<div class="a" style="left:36px;top:609px;width:1549px;height:20px;background:#fff;"></div>
<div class="a" style="left:36px;top:629px;width:1549px;height:1px;background:#cfcfcf;"></div>
<div class="a" style="left:106px;top:609px;width:1px;height:20px;background:#cfcfcf;"></div>
<div class="a" style="left:643px;top:609px;width:1px;height:20px;background:#cfcfcf;"></div>
<div class="a" style="left:752px;top:609px;width:1px;height:20px;background:#cfcfcf;"></div>
<div class="a" style="left:849px;top:609px;width:1px;height:20px;background:#cfcfcf;"></div>
<div class="a" style="left:956px;top:609px;width:1px;height:20px;background:#cfcfcf;"></div>
<div class="a" style="left:1074px;top:609px;width:1px;height:20px;background:#cfcfcf;"></div>
<div class="a" style="left:1155px;top:609px;width:1px;height:20px;background:#cfcfcf;"></div>
<div class="a" style="left:1271px;top:609px;width:1px;height:20px;background:#cfcfcf;"></div>
<div class="a" style="left:1448px;top:609px;width:1px;height:20px;background:#cfcfcf;"></div>
<div class="a" style="left:64px;top:612px;width:14px;height:14px"><svg width="14" height="14" style="position:absolute;left:0;top:0"><rect x="0.5" y="0.5" width="13" height="13" fill="#fff" stroke="#8c8c8c"/></svg></div>
<div class="a" style="left:1510px;top:612px;width:14px;height:14px"><svg width="14" height="14" style="position:absolute;left:0;top:0"><rect x="0.5" y="0.5" width="13" height="13" fill="#fff" stroke="#8c8c8c"/></svg></div>
<div class="t" style="top:610px;font-size:12.8px;color:#1e1e1e;left:111.00px;transform-origin:0 0;transform:scaleX(1.0258);">Siêu âm phần mềm (một vị trí)</div>
<div class="t" style="top:610px;font-size:12.8px;color:#1e1e1e;left:648.00px;transform-origin:0 0;transform:scaleX(0.9761);">02.0374.0001</div>
<div class="t" style="top:610px;font-size:12.8px;color:#1e1e1e;left:796.14px;transform-origin:49.83px 0;transform:scaleX(0.9628);">5497814</div>
<div class="t" style="top:610px;font-size:12.8px;color:#1e1e1e;left:945.90px;transform-origin:7.12px 0;transform:scaleX(0.9850);">1</div>
<div class="t" style="top:610px;font-size:12.8px;color:#1e1e1e;left:1031.83px;transform-origin:39.15px 0;transform:scaleX(0.9881);">58.600</div>
<div class="t" style="top:610px;font-size:12.8px;color:#1e1e1e;left:1129.63px;transform-origin:21.36px 0;transform:scaleX(0.9310);">100</div>
<div class="t" style="top:610px;font-size:12.8px;color:#1e1e1e;left:1227.83px;transform-origin:39.15px 0;transform:scaleX(0.9881);">58.600</div>
<div class="t" style="top:610px;font-size:12.8px;color:#1e1e1e;left:1276.00px;transform-origin:0 0;transform:scaleX(0.9850);">cổ</div>
<div class="a" style="left:36px;top:630px;width:1549px;height:20px;background:#fff;"></div>
<div class="a" style="left:36px;top:650px;width:1549px;height:1px;background:#cfcfcf;"></div>
<div class="a" style="left:106px;top:630px;width:1px;height:20px;background:#cfcfcf;"></div>
<div class="a" style="left:643px;top:630px;width:1px;height:20px;background:#cfcfcf;"></div>
<div class="a" style="left:752px;top:630px;width:1px;height:20px;background:#cfcfcf;"></div>
<div class="a" style="left:849px;top:630px;width:1px;height:20px;background:#cfcfcf;"></div>
<div class="a" style="left:956px;top:630px;width:1px;height:20px;background:#cfcfcf;"></div>
<div class="a" style="left:1074px;top:630px;width:1px;height:20px;background:#cfcfcf;"></div>
<div class="a" style="left:1155px;top:630px;width:1px;height:20px;background:#cfcfcf;"></div>
<div class="a" style="left:1271px;top:630px;width:1px;height:20px;background:#cfcfcf;"></div>
<div class="a" style="left:1448px;top:630px;width:1px;height:20px;background:#cfcfcf;"></div>
<div class="a" style="left:64px;top:633px;width:14px;height:14px"><svg width="14" height="14" style="position:absolute;left:0;top:0"><rect x="0.5" y="0.5" width="13" height="13" fill="#fff" stroke="#8c8c8c"/></svg></div>
<div class="a" style="left:1510px;top:633px;width:14px;height:14px"><svg width="14" height="14" style="position:absolute;left:0;top:0"><rect x="0.5" y="0.5" width="13" height="13" fill="#fff" stroke="#8c8c8c"/></svg></div>
<div class="a" style="left:36px;top:651px;width:1549px;height:26px;background:#f0f0f0;"></div>
<div class="a" style="left:36px;top:677px;width:1549px;height:1px;background:#cfcfcf;"></div>
<svg class="a" style="left:44px;top:662px" width="9" height="6"><path d="M0.6 0.8 L4 4.2 L7.4 0.8" fill="none" stroke="#3a3a3a" stroke-width="1.4"/></svg>
<div class="t" style="top:655px;font-size:13.1px;color:#1e1e1e;font-weight:bold;left:59.00px;transform-origin:0 0;transform:scaleX(0.8763);">PTTT</div>
<div class="a" style="left:36px;top:678px;width:1549px;height:20px;background:#fff;"></div>
<div class="a" style="left:36px;top:698px;width:1549px;height:1px;background:#cfcfcf;"></div>
<div class="a" style="left:106px;top:678px;width:1px;height:20px;background:#cfcfcf;"></div>
<div class="a" style="left:643px;top:678px;width:1px;height:20px;background:#cfcfcf;"></div>
<div class="a" style="left:752px;top:678px;width:1px;height:20px;background:#cfcfcf;"></div>
<div class="a" style="left:849px;top:678px;width:1px;height:20px;background:#cfcfcf;"></div>
<div class="a" style="left:956px;top:678px;width:1px;height:20px;background:#cfcfcf;"></div>
<div class="a" style="left:1074px;top:678px;width:1px;height:20px;background:#cfcfcf;"></div>
<div class="a" style="left:1155px;top:678px;width:1px;height:20px;background:#cfcfcf;"></div>
<div class="a" style="left:1271px;top:678px;width:1px;height:20px;background:#cfcfcf;"></div>
<div class="a" style="left:1448px;top:678px;width:1px;height:20px;background:#cfcfcf;"></div>
<div class="a" style="left:64px;top:681px;width:14px;height:14px"><svg width="14" height="14" style="position:absolute;left:0;top:0"><rect x="0.5" y="0.5" width="13" height="13" fill="#fff" stroke="#8c8c8c"/></svg></div>
<div class="a" style="left:1510px;top:681px;width:14px;height:14px"><svg width="14" height="14" style="position:absolute;left:0;top:0"><rect x="0.5" y="0.5" width="13" height="13" fill="#fff" stroke="#8c8c8c"/></svg></div>
<svg class="a" style="left:1586px;top:277px" width="15" height="16"><rect x="0.5" y="0.5" width="14" height="15" fill="#fff" stroke="#a0a0a0"/><path d="M4 9.5 L7.5 6 L11 9.5 Z" fill="#6a6a6a"/></svg>
<div class="a" style="left:1586px;top:293px;width:15px;height:290px;background:#fff;border:1px solid #a0a0a0;"></div>
<svg class="a" style="left:1586px;top:690px" width="15" height="16"><rect x="0.5" y="0.5" width="14" height="15" fill="#fff" stroke="#a0a0a0"/><path d="M4 6.5 L7.5 10 L11 6.5 Z" fill="#6a6a6a"/></svg>
<div class="a" style="left:12px;top:712px;width:196px;height:22px;background:#fff;border:1px solid #a0a0a0;"></div>
<svg class="a" style="left:15px;top:715px" width="16" height="16" viewBox="0 0 16 16"><defs><radialGradient id="rg2" cx="50%" cy="35%" r="60%"><stop offset="0" stop-color="#f6a08c"/><stop offset="0.55" stop-color="#e0442e"/><stop offset="1" stop-color="#b01818"/></radialGradient></defs><circle cx="8" cy="8" r="7.6" fill="url(#rg2)"/><path d="M5 5 L11 11 M11 5 L5 11" stroke="#a01010" stroke-width="3.6" stroke-linecap="round"/><path d="M5 5 L11 11 M11 5 L5 11" stroke="#f2f6ff" stroke-width="2.2" stroke-linecap="round"/></svg>
<div class="t" style="top:714px;font-size:13.1px;color:#1e1e1e;font-weight:bold;left:82.00px;transform-origin:0 0;transform:scaleX(1.0517);">Xóa chi tiết</div>
<div class="a" style="left:212px;top:712px;width:154px;height:22px;background:#fff;border:1px solid #a0a0a0;"></div>
<div class="t" style="top:714px;font-size:12.8px;color:#1e1e1e;left:254.00px;transform-origin:0 0;transform:scaleX(0.9744);">Đã Check-in</div>
<div class="a" style="left:370px;top:712px;width:164px;height:22px;background:#fff;border:1px solid #a0a0a0;"></div>
<div class="t" style="top:714px;font-size:12.8px;color:#1e1e1e;left:414.00px;transform-origin:0 0;transform:scaleX(0.9592);">Hủy Check-In</div>
<div class="a" style="left:1349px;top:712px;width:146px;height:28px;background:#e5e5f8;border:1px solid #8282e6;"></div>
<div class="a" style="left:1473px;top:713px;width:1px;height:26px;background:#8282e6;"></div>
<div class="t" style="top:717px;font-size:12.8px;color:#1e1e1e;left:1384.00px;transform-origin:0 0;transform:scaleX(0.9699);">Hủy ký số</div>
<svg class="a" style="left:1480px;top:724px" width="8" height="5"><path d="M0.5 0.5 L7.5 0.5 L4 4 Z" fill="#555"/></svg>
<div class="a" style="left:1499px;top:712px;width:104px;height:22px;background:#fff;border:1px solid #a0a0a0;"></div>
<svg class="a" style="left:1506px;top:715px" width="10" height="15"><path d="M1.6 4.2 C1.6 1.2 8 0.6 8 4.2 C8 6.4 4.8 6.6 4.8 9.4" fill="none" stroke="#2c64b8" stroke-width="2.6"/><path d="M1.6 4.2 C1.6 1.2 8 0.6 8 4.2 C8 6.4 4.8 6.6 4.8 9.4" fill="none" stroke="#a8d4f4" stroke-width="1.2"/><circle cx="4.8" cy="12.3" r="1.8" fill="#3a78c8"/></svg>
<div class="t" style="top:714px;font-size:12.8px;color:#1e1e1e;left:1542.00px;transform-origin:0 0;transform:scaleX(0.9976);">Ai làm</div>
<div class="a" style="left:12px;top:744px;width:967px;height:1px;background:#c4c4c4;"></div>
<div class="a" style="left:12px;top:744px;width:1px;height:39px;background:#c4c4c4;"></div>
<div class="a" style="left:978px;top:744px;width:1px;height:39px;background:#c4c4c4;"></div>
<div class="a" style="left:26px;top:758px;width:103px;height:22px;background:#f0f0f0;border:1px solid #cfcfcf;"></div>
<svg class="a" style="left:28px;top:760px" width="19" height="18"><circle cx="7.6" cy="10.3" r="6.2" fill="#d2d2d2" stroke="#a9a9a9" stroke-width="1"/><path d="M2 10.3 A5.6 5.6 0 0 1 7.6 4.7 V10.3 Z M7.6 10.3 V15.9 A5.6 5.6 0 0 1 2 10.3 Z" fill="#b9b9b9"/><path d="M7.6 4.6 V16 M1.9 10.3 H13.3" stroke="#eeeeee" stroke-width="1.1"/><path d="M9.4 8.6 L15.8 2.2" stroke="#7c7c7c" stroke-width="3.6"/><path d="M10.2 7.8 L15 3" stroke="#a8a8a8" stroke-width="1" stroke-dasharray="1 1"/><path d="M13 0.8 L17.2 5" stroke="#7c7c7c" stroke-width="1.4"/><path d="M9.6 8.4 L8 10" stroke="#8c8c8c" stroke-width="1.4"/></svg>
<div class="t" style="top:760px;font-size:13.1px;color:#1e1e1e;font-weight:bold;left:51.00px;transform-origin:0 0;transform:scaleX(0.9884);">Chuyển mổ</div>
<div class="a" style="left:133px;top:758px;width:114px;height:22px;background:#fff;border:1px solid #a0a0a0;"></div>
<svg class="a" style="left:136px;top:761px" width="15" height="15"><rect x="0.75" y="0.75" width="13.5" height="13.5" rx="1" fill="#f4f7fc" stroke="#6a80c4" stroke-width="1.3"/><rect x="5" y="2" width="5" height="3" fill="#5aa02a"/><path d="M2 7.5 H13" stroke="#b02020" stroke-width="1.2"/><circle cx="7.5" cy="7.5" r="1.3" fill="#fff" stroke="#b02020" stroke-width="0.9"/></svg>
<div class="t" style="top:760px;font-size:13.1px;color:#1e1e1e;font-weight:bold;left:158.00px;transform-origin:0 0;transform:scaleX(0.9600);">Tờ trình PTTT</div>
<div class="a" style="left:251px;top:758px;width:97px;height:22px;background:#fff;border:1px solid #a0a0a0;"></div>
<svg class="a" style="left:254px;top:762px" width="17" height="15"><defs><linearGradient id="og" x1="0" y1="0" x2="0" y2="1"><stop offset="0" stop-color="#f8c070"/><stop offset="1" stop-color="#e88818"/></linearGradient></defs><path d="M0.6 10.2 Q0.6 6.4 4.5 6.4 Q8.4 6.4 8.4 10.2 Z" fill="url(#og)" stroke="#c07020" stroke-width="0.6"/><path d="M7.6 10.2 Q7.6 6.4 11.5 6.4 Q15.4 6.4 15.4 10.2 Z" fill="url(#og)" stroke="#c07020" stroke-width="0.6"/><circle cx="4.5" cy="2.8" r="2.4" fill="#f6d8a8" stroke="#a45e1c" stroke-width="0.9"/><circle cx="11.5" cy="2.8" r="2.4" fill="#f6d8a8" stroke="#a45e1c" stroke-width="0.9"/><path d="M3.2 14.6 Q3.2 9.6 8 9.6 Q12.8 9.6 12.8 14.6 Z" fill="url(#og)" stroke="#c07020" stroke-width="0.6"/><circle cx="8" cy="6" r="2.7" fill="#fbe4b8" stroke="#9c561a" stroke-width="0.9"/></svg>
<div class="t" style="top:760px;font-size:13.1px;color:#1e1e1e;font-weight:bold;left:281.00px;transform-origin:0 0;transform:scaleX(0.9666);">Hội chẩn</div>
<div class="a" style="left:594px;top:758px;width:208px;height:22px;background:#fff;border:1px solid #a0a0a0;"></div>
<svg class="a" style="left:597px;top:761px" width="16" height="16"><defs><radialGradient id="bg1" cx="50%" cy="30%" r="65%"><stop offset="0" stop-color="#e0f2fc"/><stop offset="0.55" stop-color="#8cc4ee"/><stop offset="1" stop-color="#4a84d0"/></radialGradient></defs><circle cx="8" cy="8" r="7.6" fill="url(#bg1)" stroke="#3c70c4" stroke-width="0.7"/><path d="M8 3.4 V12.6 M3.4 8 H12.6" stroke="#1f4c9e" stroke-width="3.9"/><path d="M8 4.2 V11.8 M4.2 8 H11.8" stroke="#fff" stroke-width="2.1"/></svg>
<div class="t" style="top:760px;font-size:13.1px;color:#1e1e1e;font-weight:bold;left:656.00px;transform-origin:0 0;transform:scaleX(1.0086);">Thêm phiếu (F3)</div>
<div class="a" style="left:806px;top:758px;width:159px;height:22px;background:#fff;border:1px solid #a0a0a0;"></div>
<div class="a" style="left:943px;top:759px;width:1px;height:20px;background:#a0a0a0;"></div>
<svg class="a" style="left:810px;top:761px" width="15" height="15"><rect x="3.5" y="0.5" width="8" height="6" fill="#fff" stroke="#6a80c4"/><rect x="0.5" y="4.5" width="14" height="7" rx="1.5" fill="#e4ecf6" stroke="#6a80c4"/><rect x="2.5" y="4.5" width="10" height="2.5" fill="#2c3c6c"/><rect x="3.5" y="9.5" width="8" height="5" fill="#fff" stroke="#6a80c4"/><rect x="5" y="11" width="5" height="1.5" fill="#4ea0e0"/></svg>
<div class="t" style="top:760px;font-size:13.1px;color:#1e1e1e;font-weight:bold;left:852.00px;transform-origin:0 0;transform:scaleX(1.0399);">In CĐ (F9)</div>
<svg class="a" style="left:951px;top:767px" width="8" height="5"><path d="M0.5 0.5 L7.5 0.5 L4 4 Z" fill="#666"/></svg>
<div class="a" style="left:126px;top:16px;width:49px;height:134px;border:3px solid #ff0000;border-radius:2px"></div>
<div class="a" style="left:1327px;top:684px;width:182px;height:63px;border:3px solid #ff0000;border-radius:2px"></div>
<svg class="a" style="left:0;top:0" width="400" height="170"><path d="M342 151 L203 137" stroke="#ff0000" stroke-width="3" stroke-linecap="round"/><path d="M192 135.7 L206.5 132.5 L205.5 141.8 Z" fill="#ff0000"/></svg>
<div class="t" style="top:129px;font-size:14.4px;color:#ff0000;left:348.00px;transform-origin:0 0;transform:scaleX(1.0053);">Danh sách trạng thái ký số</div>
</body></html>
